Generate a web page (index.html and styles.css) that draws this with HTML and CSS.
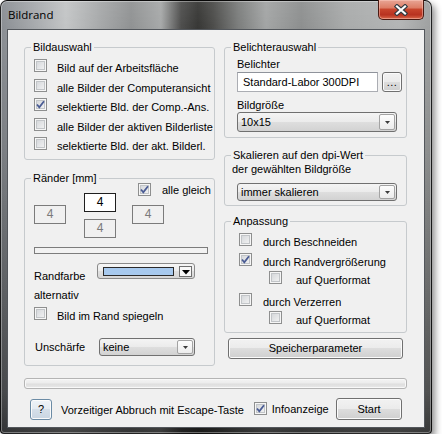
FILE: index.html
```html
<!DOCTYPE html>
<html lang="de">
<head>
<meta charset="utf-8">
<title>Bildrand</title>
<link rel="stylesheet" href="styles.css">
</head>
<body>
<div class="window">
  <div class="titlebar">
    <span class="title">Bildrand</span>
    <div class="close-btn">
      <svg width="14" height="12" viewBox="0 0 14 12">
        <path d="M3 2.5 L11 9.5 M11 2.5 L3 9.5" stroke="#333a40" stroke-width="4.4" stroke-linecap="square" fill="none"/>
        <path d="M3 2.5 L11 9.5 M11 2.5 L3 9.5" stroke="#ffffff" stroke-width="2.2" stroke-linecap="square" fill="none"/>
      </svg>
    </div>
  </div>
  <div class="client">
    <div class="columns">
      <div class="col">
        <fieldset class="group g-select">
          <legend>Bildauswahl</legend>
          <div class="check-list">
            <div class="check"><span class="cb"></span><span class="txt">Bild auf der Arbeitsfläche</span></div>
            <div class="check"><span class="cb"></span><span class="txt">alle Bilder der Computeransicht</span></div>
            <div class="check"><span class="cb"><svg class="tick" width="11" height="11" viewBox="0 0 11 11"><path d="M2 5.5 L4.3 8.3 L9 2.2" fill="none" stroke="#4a5c94" stroke-width="1.8"/></svg></span><span class="txt">selektierte Bld. der Comp.-Ans.</span></div>
            <div class="check"><span class="cb"></span><span class="txt">alle Bilder der aktiven Bilderliste</span></div>
            <div class="check"><span class="cb"></span><span class="txt">selektierte Bld. der akt. Bilderl.</span></div>
          </div>
        </fieldset>
        <fieldset class="group g-border">
          <legend>Ränder [mm]</legend>
          <div class="margins">
            <div class="check same"><span class="cb"><svg class="tick" width="11" height="11" viewBox="0 0 11 11"><path d="M2 5.5 L4.3 8.3 L9 2.2" fill="none" stroke="#4a5c94" stroke-width="1.8"/></svg></span><span class="txt">alle gleich</span></div>
            <div class="num num-top">4</div>
            <div class="num num-left dis">4</div>
            <div class="num num-right dis">4</div>
            <div class="num num-bottom dis">4</div>
          </div>
          <div class="bar"></div>
          <div class="color-row">
            <span class="lbl">Randfarbe</span>
            <div class="color-combo">
              <span class="swatch"></span>
              <span class="mini-drop"><svg width="8" height="5" viewBox="0 0 8 5"><polygon points="0,0 8,0 4,4.5" fill="#000"/></svg></span>
            </div>
          </div>
          <div class="alt">alternativ</div>
          <div class="check mirror"><span class="cb"></span><span class="txt">Bild im Rand spiegeln</span></div>
          <div class="blur-row">
            <span class="lbl">Unschärfe</span>
            <div class="combo combo-blur"><span class="val">keine</span><span class="drop"><svg width="5" height="3" viewBox="0 0 5 3"><polygon points="0,0 5,0 2.5,3" fill="#3c3c3c"/></svg></span></div>
          </div>
        </fieldset>
      </div>
      <div class="col">
        <fieldset class="group g-device">
          <legend>Belichterauswahl</legend>
          <div class="lbl-block">Belichter</div>
          <div class="device-row">
            <div class="edit">Standard-Labor 300DPI</div>
            <div class="btn btn-dots">...</div>
          </div>
          <div class="lbl-block size-lbl">Bildgröße</div>
          <div class="combo combo-size"><span class="val">10x15</span><span class="drop"><svg width="5" height="3" viewBox="0 0 5 3"><polygon points="0,0 5,0 2.5,3" fill="#3c3c3c"/></svg></span></div>
        </fieldset>
        <fieldset class="group g-scale">
          <legend>Skalieren auf den dpi-Wert</legend>
          <div class="lbl-block scale-lbl">der gewählten Bildgröße</div>
          <div class="combo combo-scale"><span class="val">immer skalieren</span><span class="drop"><svg width="5" height="3" viewBox="0 0 5 3"><polygon points="0,0 5,0 2.5,3" fill="#3c3c3c"/></svg></span></div>
        </fieldset>
        <fieldset class="group g-fit">
          <legend>Anpassung</legend>
          <div class="check main first"><span class="cb"></span><span class="txt">durch Beschneiden</span></div>
          <div class="check main"><span class="cb"><svg class="tick" width="11" height="11" viewBox="0 0 11 11"><path d="M2 5.5 L4.3 8.3 L9 2.2" fill="none" stroke="#4a5c94" stroke-width="1.8"/></svg></span><span class="txt">durch Randvergrößerung</span></div>
          <div class="check sub"><span class="cb"></span><span class="txt">auf Querformat</span></div>
          <div class="check main wide"><span class="cb"></span><span class="txt">durch Verzerren</span></div>
          <div class="check sub"><span class="cb"></span><span class="txt">auf Querformat</span></div>
        </fieldset>
        <div class="btn btn-save">Speicherparameter</div>
      </div>
    </div>
    <div class="progress"></div>
    <div class="footer">
      <div class="btn btn-help">?</div>
      <span class="esc-text">Vorzeitiger Abbruch mit Escape-Taste</span>
      <div class="check info"><span class="cb"><svg class="tick" width="11" height="11" viewBox="0 0 11 11"><path d="M2 5.5 L4.3 8.3 L9 2.2" fill="none" stroke="#4a5c94" stroke-width="1.8"/></svg></span><span class="txt">Infoanzeige</span></div>
      <div class="btn btn-start">Start</div>
    </div>
  </div>
</div>
</body>
</html>
```

FILE: styles.css
```css
* { box-sizing: border-box; }

html, body {
  margin: 0;
  background: #ffffff;
}

body {
  font: 11px/13px "Liberation Sans", Arial, sans-serif;
  color: #000;
}

/* ---------- window frame ---------- */
.window {
  width: 432px;
  height: 434px;
  border: 1px solid rgba(0, 0, 0, 0.78);
  border-radius: 7px 7px 4px 4px;
  display: flex;
  flex-direction: column;
  box-shadow: inset 0 0 0 1px rgba(255, 255, 255, 0.35), 3px 4px 7px rgba(0, 0, 0, 0.45);
  background:
    linear-gradient(to bottom, rgba(255,255,255,0.06) 0px, rgba(0,0,0,0) 28px, rgba(0,0,0,0.12) 150px, rgba(15,15,15,0.55) 390px, rgba(15,15,15,0.72) 434px),
    linear-gradient(to right, #8a8e93 0px, #a8abae 35px, #c3c5c6 65px, #a6a8a9 100px, #909293 130px, #a7a9a9 160px, #4e4e4d 180px, #373735 197px, #4c4c4a 212px, #7b7d7c 237px, #a3a5a5 265px, #8d8f8f 300px, #a9abab 345px, #b3b5b5 400px, #9c9e9e 432px);
}

.titlebar {
  height: 28px;
  display: flex;
  align-items: flex-start;
  flex: none;
}

.title {
  font: 11.5px/16px "Open Sans", "Noto Sans", sans-serif;
  color: #000;
  padding: 6px 0 0 7px;
}

.close-btn {
  margin: -1px 7px 0 auto;
  width: 46px;
  height: 20px;
  border: 1px solid #4a1a12;
  border-top: none;
  border-radius: 0 0 5px 5px;
  background: linear-gradient(#e8a595 0%, #dd7e67 40%, #c7442c 50%, #b83220 78%, #d9684a 100%);
  box-shadow: inset 0 0 0 1px rgba(255, 210, 200, 0.45);
  display: flex;
  align-items: center;
  justify-content: center;
}

.client {
  flex: 1;
  margin: 0 6px 5px 6px;
  border: 1px solid #53575c;
  background: #f0f0f0;
  padding: 11px 17px 0 16px;
  display: flex;
  flex-direction: column;
}

.columns {
  display: grid;
  grid-template-columns: 191px 183px;
  column-gap: 9px;
  align-items: start;
  height: 326px;
}

.col {
  display: flex;
  flex-direction: column;
}

/* ---------- group boxes ---------- */
.group {
  margin: 0;
  min-width: 0;
  border: 1px solid #c6cacd;
  border-radius: 3px;
  padding: 0;
}

.group legend {
  padding: 0 2px;
  line-height: 13px;
}

.g-select { padding: 5px 6px 6px 9px; }
.g-select legend { margin-left: -3px; }

.check-list {
  display: flex;
  flex-direction: column;
  gap: 3.5px;
}

.check {
  display: flex;
  align-items: flex-start;
  white-space: nowrap;
}

.check .txt {
  margin-left: 10px;
  margin-top: 3px;
}

.cb {
  flex: none;
  width: 13px;
  height: 13px;
  border: 1px solid #8e8f8f;
  background: linear-gradient(135deg, #cfd2d6, #f7f7f7);
  box-shadow: inset 0 0 0 1px #f6f6f6, inset 0 0 0 2px #c2c5c8;
  display: flex;
  align-items: center;
  justify-content: center;
}

.tick { display: block; }

/* Ränder */
.g-border { margin-top: 12px; padding: 0 6px 9px 9px; }
.g-border legend { margin-left: -3px; }

.margins {
  margin-top: -2px;
  display: grid;
  grid-template-columns: 32px 18px 32px 16px 32px 1fr;
  grid-template-rows: 10px 3px 9px 7px 7px 5px 14px;
}

.same {
  grid-column: 5 / -1;
  grid-row: 1 / 4;
  align-self: start;
  margin-left: 6px;
}
.same .txt { margin-left: 11px; margin-top: 1px; }

.num {
  border: 1px solid #1e1e1e;
  background: #fff;
  display: flex;
  align-items: center;
  justify-content: center;
  font-size: 12px;
}
.num.dis {
  border-color: #7b7b7b;
  background: #f0f0f0;
  color: #7a7a7a;
}
.num-top { grid-column: 3; grid-row: 2 / 5; }
.num-left { grid-column: 1; grid-row: 4 / 7; }
.num-right { grid-column: 5; grid-row: 4 / 7; }
.num-bottom { grid-column: 3; grid-row: 6 / 8; }

.bar {
  margin-top: 9px;
  height: 7px;
  border: 1px solid #7c7c7c;
  background: #f2f2f2;
}

.color-row {
  margin-top: 9px;
  display: flex;
  align-items: flex-start;
}
.color-row .lbl {
  width: 63px;
  margin-top: 7px;
}

.color-combo {
  width: 98px;
  height: 16px;
  border: 1px solid #8a8a8a;
  border-radius: 3px;
  background: linear-gradient(#f6f6f6, #ececec 50%, #e0e0e0 51%, #d6d6d6);
  display: flex;
  align-items: center;
  padding: 0 2px 0 5px;
}
.swatch {
  width: 71px;
  height: 9px;
  border: 1px solid #2a2a2a;
  background: #a7c9ee;
}
.mini-drop {
  margin-left: auto;
  width: 13px;
  height: 11px;
  border: 1px solid #6f6f6f;
  background: #f8f8f8;
  display: flex;
  align-items: flex-end;
  justify-content: center;
  padding-bottom: 1px;
}

.alt { margin-top: 6px; }

.mirror { margin-top: 5px; }

.blur-row {
  margin-top: 15px;
  display: flex;
  align-items: center;
}
.blur-row .lbl {
  width: 65px;
  padding-left: 1px;
}

/* combos */
.combo {
  display: flex;
  align-items: stretch;
  border: 1px solid #707070;
  border-radius: 3px;
  background: linear-gradient(#f4f4f4, #ebebeb 50%, #dedede 51%, #d2d2d2);
}
.combo .val {
  align-self: center;
  padding-left: 3px;
}
.combo .drop {
  margin: 1px 1px 1px auto;
  width: 16px;
  border: 1px solid #a3a3a3;
  border-radius: 2px;
  background: linear-gradient(#fdfdfd, #ececec);
  display: flex;
  align-items: center;
  justify-content: center;
}
.combo-blur { width: 96px; height: 18px; }

/* right column */
.g-device { padding: 4px 4px 5px 12px; }
.g-device legend { margin-left: -6px; }

.device-row {
  margin-top: 1px;
  display: flex;
  gap: 4px;
}
.edit {
  width: 141px;
  height: 20px;
  border: 1px solid #abadb3;
  border-top-color: #8f939b;
  background: #fff;
  padding-left: 5px;
  display: flex;
  align-items: center;
}
.size-lbl { margin-top: 7px; }
.combo-size { width: 160px; height: 20px; }

.g-scale { margin-top: 11px; padding: 1px 4px 4px 12px; }
.g-scale legend { margin-left: -6px; }
.scale-lbl { margin-left: -5px; }
.combo-scale { margin-top: 7px; width: 160px; height: 18px; }

.g-fit { margin-top: 9px; padding: 5px 4px 5px 14px; }
.g-fit legend { margin-left: -8px; }
.g-fit .main .txt { margin-left: 11px; }
.g-fit .main { margin-top: 4px; }
.g-fit .main.first { margin-top: 0; }
.g-fit .main.wide { margin-top: 6px; }
.g-fit .sub { margin-top: 2px; margin-left: 30px; }
.g-fit .sub .txt { margin-left: 14px; }

/* buttons */
.btn {
  border: 1px solid #707070;
  border-radius: 3px;
  background: linear-gradient(#f2f2f2 0%, #ebebeb 49%, #dddddd 50%, #cfcfcf 100%);
  box-shadow: inset 0 0 0 1px #fbfbfb;
  display: flex;
  align-items: center;
  justify-content: center;
  white-space: nowrap;
}
.btn-dots {
  width: 20px;
  height: 20px;
  align-items: flex-end;
  padding-bottom: 2px;
  letter-spacing: 0.5px;
}
.btn-save {
  margin: 5px 4px 0 4px;
  height: 21px;
}

/* bottom */
.progress {
  margin-top: 11px;
  height: 11px;
  border: 1px solid #b4b4b4;
  border-radius: 3px;
  background: linear-gradient(#f3f3f3, #ececec 45%, #dedede 55%, #e8e8e8);
  box-shadow: inset 0 0 0 1px #f8f8f8;
}

.footer {
  margin-top: 9px;
  height: 22px;
  display: flex;
  align-items: center;
  padding: 0 5px 0 6px;
}
.btn-help {
  width: 22px;
  height: 21px;
  border-color: #6b8ba5;
  background: linear-gradient(#eef3f8 0%, #e4ebf2 49%, #d5dfe9 50%, #cad6e2 100%);
}
.esc-text {
  margin-left: 9px;
  margin-top: 2px;
}
.info { margin-left: 10px; }
.info .txt { margin-left: 5px; margin-top: 1px; }
.btn-start {
  margin-left: auto;
  width: 66px;
  height: 22px;
}
```
